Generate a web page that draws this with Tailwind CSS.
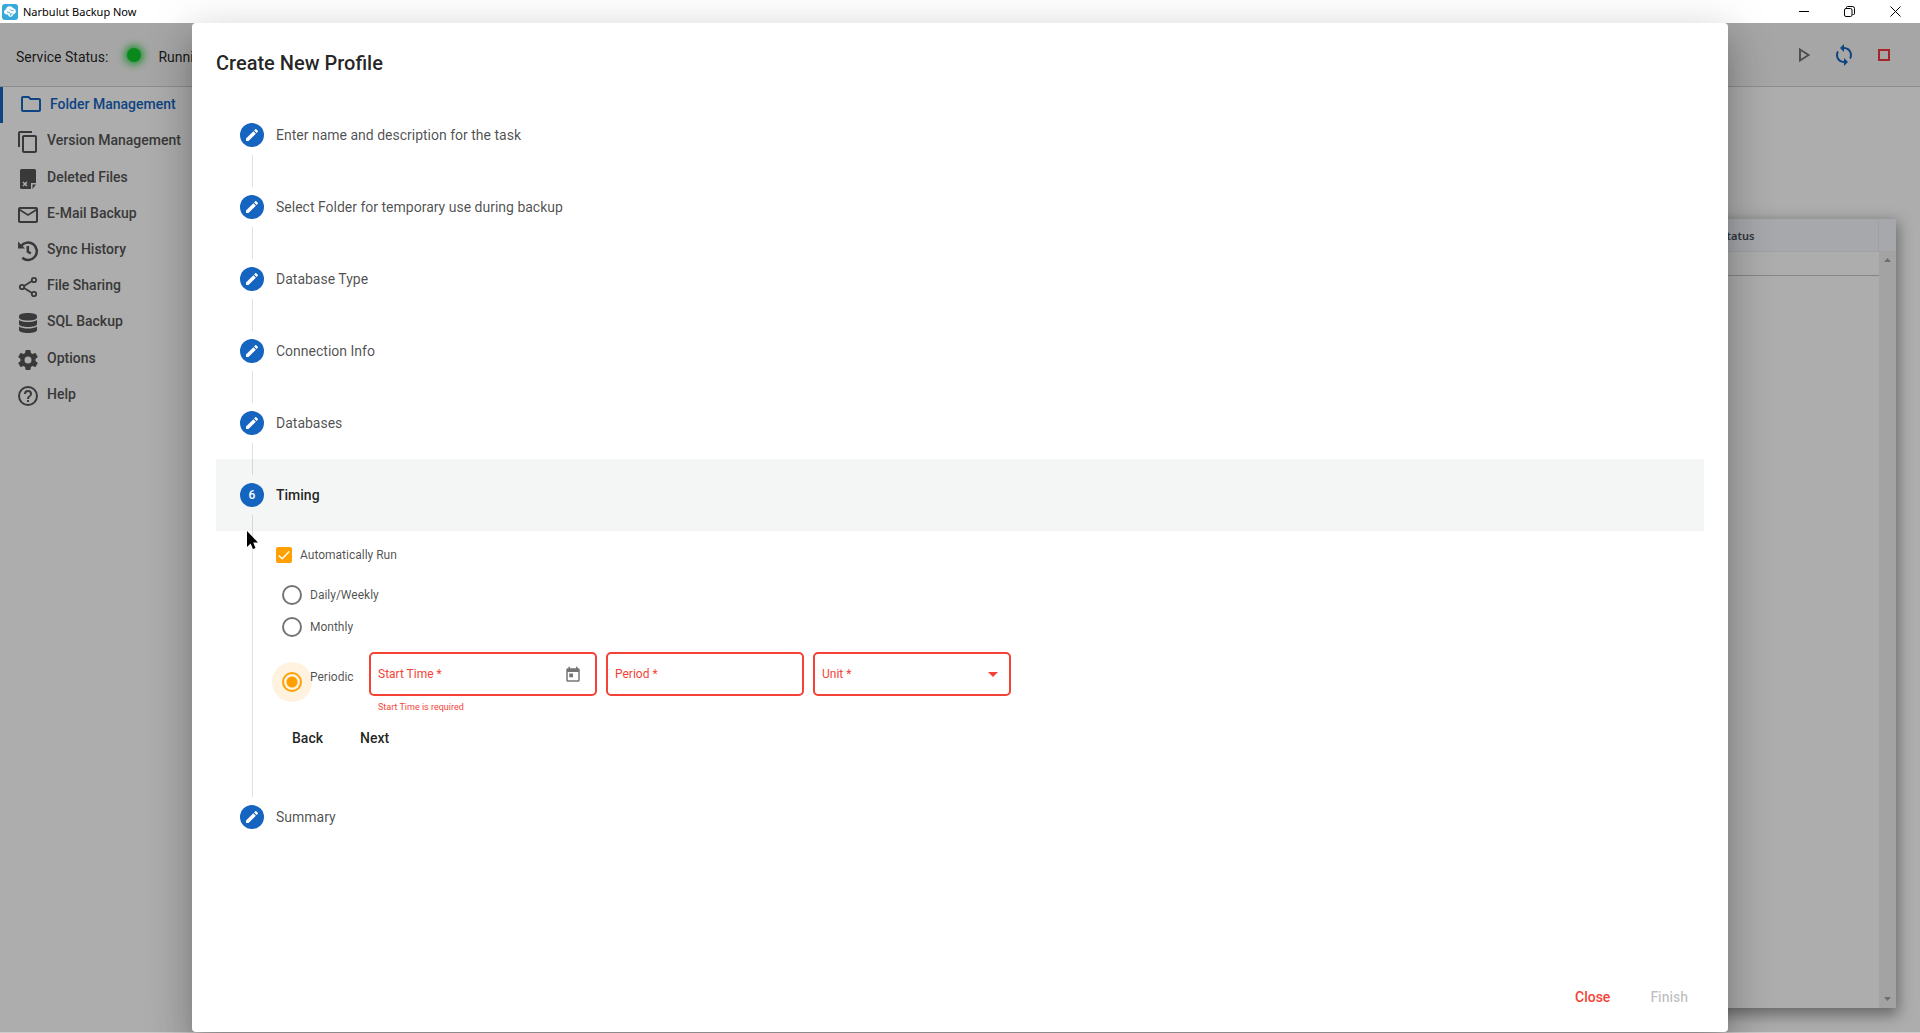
<!DOCTYPE html>
<html lang="en">
<head>
    <meta charset="UTF-8">
    <meta name="viewport" content="width=device-width, initial-scale=1.0">
    <title>Narbulut Backup Now</title>
    <script src="https://cdn.jsdelivr.net/npm/@tailwindcss/browser@4"></script>
</head>
<body class="h-screen flex flex-col overflow-hidden bg-white text-sm text-black/87 font-[Roboto,sans-serif]">
    <!-- Shared icons -->
    <svg class="hidden">
        <symbol id="pencil" viewBox="0 0 24 24"><path fill="currentColor" d="M3 17.25V21h3.75L17.81 9.94l-3.75-3.75L3 17.25zM20.71 7.04a1 1 0 0 0 0-1.41l-2.34-2.34a1 1 0 0 0-1.41 0l-1.83 1.83 3.75 3.75 1.83-1.83z"/></symbol>
    </svg>

    <!-- Title bar -->
    <header class="h-[23px] shrink-0 flex items-center justify-between bg-white text-black">
        <div class="flex items-center gap-[5px] pl-[2px]">
            <svg class="size-4" viewBox="0 0 16 16">
                <rect width="16" height="16" rx="3" fill="#35a8dc"/>
                <path fill="#fff" d="M4.400 10.400a2.500 2.500 0 0 1-.6-4.900 4 4 0 0 1 7.400-1.300 3 3 0 0 1 1 5.700l-1 .5-.7 1.600-1.800 1-2-.8-.6-1.800z"/>
                <path d="M5 8.200h2.300l1.200 2 2-.4M7.800 5.500l2 1.200 1.700-.2M8.500 10.200v1.500" fill="none" stroke="#35a8dc" stroke-width=".9"/>
            </svg>
            <span class="text-[11px] font-['Noto_Sans',sans-serif]">Narbulut Backup Now</span>
        </div>
        <div class="flex pr-px">
            <button class="w-[45px] h-[22px] flex items-center justify-center" aria-label="Minimize">
                <svg class="size-[11px]" viewBox="0 0 11 11" stroke="currentColor"><path d="M0 5.500h10"/></svg>
            </button>
            <button class="w-[45px] h-[22px] flex items-center justify-center" aria-label="Restore">
                <svg class="size-[11px]" viewBox="0 0 11 11" fill="none" stroke="currentColor"><rect x=".5" y="2.500" width="7.500" height="8" rx="1.500"/><path d="M2.500 2V1.500a1 1 0 0 1 1-1H8.500a2 2 0 0 1 2 2V7.500a1 1 0 0 1-1 1H8.500"/></svg>
            </button>
            <button class="w-[47px] h-[22px] flex items-center justify-center" aria-label="Close window">
                <svg class="size-[11px]" viewBox="0 0 11 11" stroke="currentColor"><path d="M.5.5l10 10M10.500.5l-10 10"/></svg>
            </button>
        </div>
    </header>

    <div class="relative flex-1 min-h-0 flex flex-col border-b border-[#ccc]">
        <!-- Toolbar -->
        <div class="h-16 shrink-0 flex items-center justify-between bg-[#f5f5f5] border-b border-[#d0d0d0] pl-4 pr-6">
            <div class="flex items-center">
                <span class="pt-1">Service Status:</span>
                <span class="ml-[19px] mr-[17px] size-[14px] rounded-full bg-[#0ecb2a] shadow-[0_0_8px_2px_#0ecb2a]"></span>
                <span class="pt-1">Running</span>
            </div>
            <div class="flex items-center gap-4">
                <button class="text-[#757575]" aria-label="Start">
                    <svg class="size-6" viewBox="0 0 24 24" fill="none" stroke="currentColor" stroke-width="2"><path d="M8 6.500v11l8.500-5.500z"/></svg>
                </button>
                <button class="text-[#1565c0]" aria-label="Refresh">
                    <svg class="size-6" viewBox="0 0 24 24" fill="currentColor"><path d="M12 4V1L8 5l4 4V6c3.310 0 6 2.690 6 6 0 1.010-.25 1.970-.7 2.800l1.460 1.460A7.930 7.930 0 0 0 20 12c0-4.420-3.580-8-8-8zm0 14c-3.310 0-6-2.690-6-6 0-1.010.25-1.970.7-2.800L5.240 7.740A7.930 7.930 0 0 0 4 12c0 4.420 3.580 8 8 8v3l4-4-4-4v3z"/></svg>
                </button>
                <button class="text-[#f0383b]" aria-label="Stop">
                    <svg class="size-6" viewBox="0 0 24 24" fill="none" stroke="currentColor" stroke-width="2"><rect x="7" y="7" width="10" height="10"/></svg>
                </button>
            </div>
        </div>

        <div class="flex-1 min-h-0 flex">
            <!-- Sidebar -->
            <nav class="w-[216px] h-[326px] shrink-0 flex flex-col font-medium text-[#555]">
                <a href="#" class="flex-1 flex items-center gap-[7px] pl-4 pb-0.5 border-l-3 border-[#1565c0] text-[#1565c0]">
                    <svg class="size-6" viewBox="0 0 24 24" fill="currentColor"><path d="M9.170 6l2 2H20v10H4V6h5.170M10 4H4c-1.100 0-2 .9-2 2v12c0 1.100.9 2 2 2h16c1.100 0 2-.9 2-2V8c0-1.100-.9-2-2-2h-8l-2-2z"/></svg>
                    Folder Management
                </a>
                <a href="#" class="flex-1 flex items-center gap-[7px] pl-4 pb-0.5">
                    <svg class="size-6 mt-1 shrink-0" viewBox="0 0 24 24" fill="currentColor"><path d="M16 1H4c-1.100 0-2 .9-2 2v14h2V3h12V1zm3 4H8c-1.100 0-2 .9-2 2v14c0 1.100.9 2 2 2h11c1.100 0 2-.9 2-2V7c0-1.100-.9-2-2-2zm0 16H8V7h11v14z"/></svg>
                    Version Management
                </a>
                <a href="#" class="flex-1 flex items-center gap-[7px] pl-4 pb-0.5">
                    <svg class="size-6 mt-1" viewBox="0 0 24 24"><path fill="currentColor" d="M4 3.500a1.500 1.500 0 0 1 1.500-1.500h13A1.500 1.500 0 0 1 20 3.500V16h-5v6H5.500A1.500 1.500 0 0 1 4 20.500zM16.500 22v-4.500H20z"/><path d="M7 15l4 4m0-4l-4 4" stroke="#fff" stroke-width="1.500"/></svg>
                    Deleted Files
                </a>
                <a href="#" class="flex-1 flex items-center gap-[7px] pl-4 pb-0.5">
                    <svg class="size-6 mt-1" viewBox="0 0 24 24" fill="currentColor"><path d="M22 6c0-1.100-.9-2-2-2H4c-1.100 0-2 .9-2 2v12c0 1.100.9 2 2 2h16c1.100 0 2-.9 2-2V6zm-2 0l-8 5-8-5h16zm0 12H4V8l8 5 8-5v10z"/></svg>
                    E-Mail Backup
                </a>
                <a href="#" class="flex-1 flex items-center gap-[7px] pl-4 pb-0.5">
                    <svg class="size-6 mt-1" viewBox="0 0 24 24" fill="none" stroke="currentColor" stroke-width="2.500"><path d="M5 7.200A8.700 8.700 0 1 1 6.300 18.700M11.800 7v5.500l3 2"/><path d="M2 2.500v7h7z" fill="currentColor" stroke="none"/></svg>
                    Sync History
                </a>
                <a href="#" class="flex-1 flex items-center gap-[7px] pl-4 pb-0.5">
                    <svg class="size-6 mt-1" viewBox="0 0 24 24" fill="none" stroke="currentColor" stroke-width="1.800"><circle cx="18" cy="5" r="2.200"/><circle cx="6" cy="12" r="2.200"/><circle cx="18" cy="19" r="2.200"/><path d="M8 10.900l8-4.800M8 13.100l8 4.800"/></svg>
                    File Sharing
                </a>
                <a href="#" class="flex-1 flex items-center gap-[7px] pl-4 pb-0.5">
                    <svg class="size-6 mt-1" viewBox="0 0 24 24" fill="currentColor"><path d="M3 5c0-2 4-3 9-3s9 1 9 3v1.500c0 2-4 3-9 3s-9-1-9-3z"/><path d="M3 9c2 1.400 5.500 2 9 2s7-.6 9-2v4c0 1.800-4 3-9 3s-9-1.200-9-3z"/><path d="M3 15.500c2 1.400 5.500 2 9 2s7-.6 9-2V19c0 1.800-4 3-9 3s-9-1.200-9-3z"/></svg>
                    SQL Backup
                </a>
                <a href="#" class="flex-1 flex items-center gap-[7px] pl-4 pb-0.5">
                    <svg class="size-6 mt-1" viewBox="0 0 24 24" fill="currentColor"><path d="M19.430 12.980c.04-.32.070-.64.070-.98s-.03-.66-.07-.98l2.110-1.650a.5.5 0 0 0 .12-.64l-2-3.460a.5.5 0 0 0-.61-.22l-2.490 1a7.300 7.300 0 0 0-1.690-.98l-.38-2.650A.49.49 0 0 0 14 2h-4a.49.49 0 0 0-.49.42l-.38 2.650c-.61.25-1.170.59-1.690.98l-2.490-1a.5.5 0 0 0-.61.22l-2 3.460a.5.5 0 0 0 .12.64l2.110 1.650c-.04.32-.07.65-.07.980s.03.66.07.98l-2.110 1.650a.5.5 0 0 0-.12.64l2 3.460c.12.22.39.3.61.22l2.490-1c.52.4 1.080.73 1.690.98l.38 2.650c.03.24.24.42.49.42h4c.25 0 .46-.18.49-.42l.38-2.650c.61-.25 1.170-.59 1.690-.98l2.490 1c.23.09.49 0 .61-.22l2-3.460a.5.5 0 0 0-.12-.64zM12 15.500a3.500 3.500 0 1 1 0-7 3.500 3.500 0 0 1 0 7z"/></svg>
                    Options
                </a>
                <a href="#" class="flex-1 flex items-center gap-[7px] pl-4 pb-0.5">
                    <svg class="size-6 mt-1" viewBox="0 0 24 24" fill="currentColor"><path d="M11 18h2v-2h-2v2zm1-16a10 10 0 1 0 0 20 10 10 0 0 0 0-20zm0 18a8 8 0 1 1 0-16 8 8 0 0 1 0 16zm0-14a4 4 0 0 0-4 4h2a2 2 0 1 1 4 0c0 2-3 1.750-3 5h2c0-2.250 3-2.500 3-5a4 4 0 0 0-4-4z"/></svg>
                    Help
                </a>
            </nav>

            <!-- Task list -->
            <main class="flex-1 pt-[132px] pr-6 pb-6 flex">
                <div class="flex-1 flex shadow-[0_5px_14px_2px_rgba(0,0,0,0.4)] bg-white">
                    <div class="flex-1">
                        <table class="w-full table-fixed border-collapse font-['Noto_Sans',sans-serif]">
                            <thead>
                                <tr class="h-8 bg-[#f5f8fc] border-b border-[#eaeef3]">
                                    <th></th>
                                    <th class="w-[163px] pl-[5px] pt-0.5 text-left text-[11px] font-semibold text-[#4a4f5a] border-r border-[#eaeef3]">Status</th>
                                </tr>
                            </thead>
                            <tbody>
                                <tr class="h-6 border-b border-[#c4c4c4]"><td></td><td></td></tr>
                            </tbody>
                        </table>
                    </div>
                    <div class="w-[17px] flex flex-col bg-[#f1f1f1] text-[#a3a3a3]">
                        <div class="h-8 bg-[#f5f8fc]"></div>
                        <div class="flex-1 flex flex-col items-center justify-between py-[7px]">
                            <svg class="w-[7px] h-1" viewBox="0 0 7 4" fill="currentColor"><path d="M0 4l3.500-4L7 4z"/></svg>
                            <svg class="w-[7px] h-1" viewBox="0 0 7 4" fill="currentColor"><path d="M0 0l3.500 4L7 0z"/></svg>
                        </div>
                    </div>
                </div>
            </main>
        </div>

        <!-- Modal -->
        <div class="absolute inset-0 flex justify-center bg-black/32">
            <div role="dialog" aria-labelledby="dialogTitle" class="w-4/5 flex flex-col bg-white rounded p-6 pb-[17px] shadow-[0_11px_15px_-7px_rgba(0,0,0,0.2),0_24px_38px_3px_rgba(0,0,0,0.14),0_9px_46px_8px_rgba(0,0,0,0.12)]">
                <h2 id="dialogTitle" class="text-xl leading-8 font-medium mb-5">Create New Profile</h2>

                <ol class="flex-1 text-black/70">
                    <li class="relative h-[72px] px-6 flex items-center gap-3">
                        <span class="size-6 rounded-full bg-[#1565c0] text-white flex items-center justify-center"><svg class="size-4"><use href="#pencil"/></svg></span>
                        Enter name and description for the task
                        <span class="absolute left-9 top-14 h-8 w-px bg-black/12"></span>
                    </li>
                    <li class="relative h-[72px] px-6 flex items-center gap-3">
                        <span class="size-6 rounded-full bg-[#1565c0] text-white flex items-center justify-center"><svg class="size-4"><use href="#pencil"/></svg></span>
                        Select Folder for temporary use during backup
                        <span class="absolute left-9 top-14 h-8 w-px bg-black/12"></span>
                    </li>
                    <li class="relative h-[72px] px-6 flex items-center gap-3">
                        <span class="size-6 rounded-full bg-[#1565c0] text-white flex items-center justify-center"><svg class="size-4"><use href="#pencil"/></svg></span>
                        Database Type
                        <span class="absolute left-9 top-14 h-8 w-px bg-black/12"></span>
                    </li>
                    <li class="relative h-[72px] px-6 flex items-center gap-3">
                        <span class="size-6 rounded-full bg-[#1565c0] text-white flex items-center justify-center"><svg class="size-4"><use href="#pencil"/></svg></span>
                        Connection Info
                        <span class="absolute left-9 top-14 h-8 w-px bg-black/12"></span>
                    </li>
                    <li class="relative z-10 h-[72px] px-6 flex items-center gap-3">
                        <span class="size-6 rounded-full bg-[#1565c0] text-white flex items-center justify-center"><svg class="size-4"><use href="#pencil"/></svg></span>
                        Databases
                        <span class="absolute left-9 top-14 h-8 w-px bg-black/12"></span>
                    </li>
                    <li class="relative">
                        <div class="h-[72px] px-6 flex items-center gap-3 bg-[#f4f6f5] font-medium text-black/87">
                            <span class="size-6 rounded-full bg-[#1565c0] text-white text-xs flex items-center justify-center">6</span>
                            Timing
                        </div>
                        <span class="absolute left-9 top-14 -bottom-4 w-px bg-black/12"></span>

                        <!-- Timing form -->
                        <form class="h-[250px] pl-[60px] pt-4 text-xs">
                            <label class="flex items-center gap-2 w-fit">
                                <span class="relative size-4">
                                    <input type="checkbox" checked class="block size-4 appearance-none rounded-xs bg-[#ffa000]">
                                    <svg class="absolute inset-0 size-4 pointer-events-none" viewBox="0 0 16 16" fill="none" stroke="#fff" stroke-width="1.500"><path d="M2.800 8.500l3.400 3.200 7-7.200"/></svg>
                                </span>
                                Automatically Run
                            </label>
                            <div class="pl-[6px] pt-4">
                                <label class="flex items-center gap-2 h-8 w-fit">
                                    <input type="radio" name="timing" class="appearance-none size-5 rounded-full border-2 border-[#757575]">
                                    Daily/Weekly
                                </label>
                                <label class="flex items-center gap-2 h-8 w-fit">
                                    <input type="radio" name="timing" class="appearance-none size-5 rounded-full border-2 border-[#757575]">
                                    Monthly
                                </label>
                                <div class="flex items-start pt-[9px] text-[#f44336]">
                                    <label class="w-[87px] h-[50px] flex items-center gap-2 text-black/70">
                                        <input type="radio" name="timing" checked class="appearance-none size-5 mt-[10px] rounded-full border-2 border-[#ffa000] bg-[radial-gradient(circle,#ffa000_5px,#fff3e0_6px)] shadow-[0_0_0_10px_#fff3e0]">
                                        <span class="relative">Periodic</span>
                                    </label>
                                    <div class="w-[228px]">
                                        <div class="relative">
                                            <input type="text" aria-label="Start Time" placeholder="Start Time *" class="block w-full h-11 rounded-[5px] border-2 border-[#f44336] pl-[7px] pr-10 placeholder:text-[#f44336] placeholder:opacity-100">
                                            <button type="button" aria-label="Open calendar" class="absolute right-[15px] top-[14px] text-[#757575]">
                                                <svg class="size-[18px]" viewBox="0 0 24 24" fill="currentColor"><path d="M19 3h-1V1h-2v2H8V1H6v2H5c-1.110 0-1.990.9-1.990 2L3 19c0 1.100.89 2 2 2h14c1.100 0 2-.9 2-2V5c0-1.100-.9-2-2-2zm0 16H5V8h14v11zM7 10h5v5H7z"/></svg>
                                            </button>
                                        </div>
                                        <p class="pl-[9px] pt-1 text-[9px] leading-[14px]">Start Time is required</p>
                                    </div>
                                    <input type="text" aria-label="Period" placeholder="Period *" class="block ml-[9px] w-[198px] h-11 rounded-[5px] border-2 border-[#f44336] px-[7px] placeholder:text-[#f44336] placeholder:opacity-100">
                                    <div class="relative ml-[9px] w-[198px]">
                                        <select aria-label="Unit" class="block w-full h-11 appearance-none rounded-[5px] border-2 border-[#f44336] px-[7px]">
                                            <option>Unit *</option>
                                        </select>
                                        <svg class="absolute right-[13px] top-5 w-[10px] h-[5px] pointer-events-none" viewBox="0 0 10 5" fill="currentColor"><path d="M0 0h10L5 5z"/></svg>
                                    </div>
                                </div>
                            </div>
                            <div class="flex gap-[5px] mt-[6px] text-sm font-medium text-black/87">
                                <button type="button" class="h-9 px-4">Back</button>
                                <button type="button" class="h-9 px-4">Next</button>
                            </div>
                        </form>
                    </li>
                    <li class="h-[72px] px-6 flex items-center gap-3">
                        <span class="size-6 rounded-full bg-[#1565c0] text-white flex items-center justify-center"><svg class="size-4"><use href="#pencil"/></svg></span>
                        Summary
                    </li>
                </ol>

                <div class="flex justify-end gap-2 font-medium">
                    <button class="h-9 px-4 text-[#f44336]">Close</button>
                    <button disabled class="h-9 px-4 text-black/26">Finish</button>
                </div>
            </div>
        </div>
    </div>

    <!-- Mouse pointer -->
    <svg class="absolute left-[246px] top-[530px] w-3 h-[20px] pointer-events-none" viewBox="0 0 12 20"><path d="M1 1v16l3.600-3.500L7 19l2.500-1-2.300-5.500H12z"/></svg>
</body>
</html>
